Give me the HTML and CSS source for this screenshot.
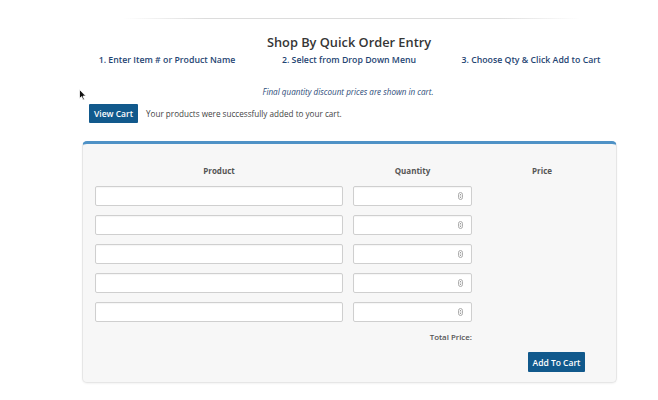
FILE: index.html
```html
<!DOCTYPE html>
<html>
<head>
<meta charset="utf-8">
<link rel="stylesheet" href="styles.css">
</head>
<body>
<div class="page">
  <div class="rule"></div>
  <h1 class="title">Shop By Quick Order Entry</h1>
  <div class="steps">
    <span>1. Enter Item # or Product Name</span>
    <span>2. Select from Drop Down Menu</span>
    <span>3. Choose Qty &amp; Click Add to Cart</span>
  </div>
  <p class="note">Final quantity discount prices are shown in cart.</p>
  <div class="cartbar">
    <button class="btn">View Cart</button>
    <span class="msg">Your products were successfully added to your cart.</span>
  </div>
  <div class="panel">
    <div class="grid">
      <div class="th">Product</div>
      <div class="th">Quantity</div>
      <div class="th">Price</div>

      <div class="inp"></div><div class="inp qty"><svg class="spin" width="5" height="8" viewBox="0 0 5 8"><rect x="0.5" y="0.5" width="4" height="7" rx="2" fill="none" stroke="#999" stroke-width="0.8"/><path d="M1.4 3.2 L2.5 1.9 L3.6 3.2Z M1.4 4.8 L2.5 6.1 L3.6 4.8Z" fill="#777"/></svg></div><div></div>
      <div class="inp"></div><div class="inp qty"><svg class="spin" width="5" height="8" viewBox="0 0 5 8"><rect x="0.5" y="0.5" width="4" height="7" rx="2" fill="none" stroke="#999" stroke-width="0.8"/><path d="M1.4 3.2 L2.5 1.9 L3.6 3.2Z M1.4 4.8 L2.5 6.1 L3.6 4.8Z" fill="#777"/></svg></div><div></div>
      <div class="inp"></div><div class="inp qty"><svg class="spin" width="5" height="8" viewBox="0 0 5 8"><rect x="0.5" y="0.5" width="4" height="7" rx="2" fill="none" stroke="#999" stroke-width="0.8"/><path d="M1.4 3.2 L2.5 1.9 L3.6 3.2Z M1.4 4.8 L2.5 6.1 L3.6 4.8Z" fill="#777"/></svg></div><div></div>
      <div class="inp"></div><div class="inp qty"><svg class="spin" width="5" height="8" viewBox="0 0 5 8"><rect x="0.5" y="0.5" width="4" height="7" rx="2" fill="none" stroke="#999" stroke-width="0.8"/><path d="M1.4 3.2 L2.5 1.9 L3.6 3.2Z M1.4 4.8 L2.5 6.1 L3.6 4.8Z" fill="#777"/></svg></div><div></div>
      <div class="inp"></div><div class="inp qty"><svg class="spin" width="5" height="8" viewBox="0 0 5 8"><rect x="0.5" y="0.5" width="4" height="7" rx="2" fill="none" stroke="#999" stroke-width="0.8"/><path d="M1.4 3.2 L2.5 1.9 L3.6 3.2Z M1.4 4.8 L2.5 6.1 L3.6 4.8Z" fill="#777"/></svg></div><div></div>

      <div class="total">Total Price:</div>
    </div>
    <div class="actions">
      <button class="btn add">Add To Cart</button>
    </div>
  </div>
  <svg class="cursor" width="8" height="12" viewBox="0 0 8 12"><path d="M0.5 0.5 L0.5 9.5 L2.6 7.6 L4 11 L5.4 10.4 L4 7.1 L6.8 7.1 Z" fill="#111" stroke="#fff" stroke-width="0.8"/></svg>
</div>
</body>
</html>
```

FILE: styles.css
```css
* { box-sizing: border-box; }
html, body { margin: 0; padding: 0; background: #fff; }
body { font-family: "Open Sans", "Liberation Sans", sans-serif; }
.page { position: relative; width: 658px; height: 400px; padding-top: 18px; }
.rule {
  width: 457px; height: 1px; margin-left: 123px;
  background: linear-gradient(to right, rgba(225,225,225,0), #dcdcdc 18%, #dcdcdc 82%, rgba(225,225,225,0));
}
.title {
  margin: 14px 0 0; padding-left: 40px; text-align: center; font-size: 12.8px; line-height: 18px;
  font-weight: 600; color: #363636;
}
.steps {
  display: grid; grid-template-columns: repeat(3, 182px); margin: 3px 0 0 76px;
  font-size: 8.75px; line-height: 12px; font-weight: 600; color: #1f4573; text-align: center;
}
.note {
  margin: 20px 0 0; padding-left: 38px; text-align: center; font-size: 8.1px; line-height: 12px;
  font-style: italic; color: #2b4b78;
}
.cartbar { display: flex; align-items: center; margin: 6px 0 0 89px; height: 19px; }
.btn {
  border: none; background: #11598c; color: #fff; font-family: inherit;
  font-size: 8.5px; font-weight: 600; padding: 0; border-radius: 1px; cursor: default;
}
.cartbar .btn { width: 49px; height: 19px; }
.msg { margin-left: 8px; font-size: 8.15px; color: #444; }
.panel {
  margin: 18px 0 0 82px; width: 535px; height: 242px;
  background: #f7f7f7; border: 1px solid #e6e6e6; border-top: 3px solid #4f92c6;
  border-radius: 5px; box-shadow: 0 1px 2px rgba(0,0,0,0.05);
  padding: 21px 0 0 12px;
}
.grid {
  display: grid; grid-template-columns: 248px 119px 120px; column-gap: 10px; row-gap: 9px;
}
.th { text-align: center; font-size: 8px; line-height: 12px; font-weight: 700; color: #555; }
.inp {
  height: 20px; background: #fff; border: 1px solid #cfcfcf; border-radius: 2px;
  box-shadow: inset 0 1px 1px rgba(0,0,0,0.04);
}
.qty { display: flex; align-items: center; justify-content: flex-end; padding-right: 8px; }
.spin { display: block; }
.total {
  grid-column: 1 / 3; text-align: right; font-size: 7.9px; line-height: 12px;
  font-weight: 600; color: #555;
}
.actions { display: flex; justify-content: flex-end; padding-right: 31px; margin-top: 9px; }
.add { width: 57px; height: 20px; }
.cursor { position: absolute; left: 79px; top: 89px; }
```
